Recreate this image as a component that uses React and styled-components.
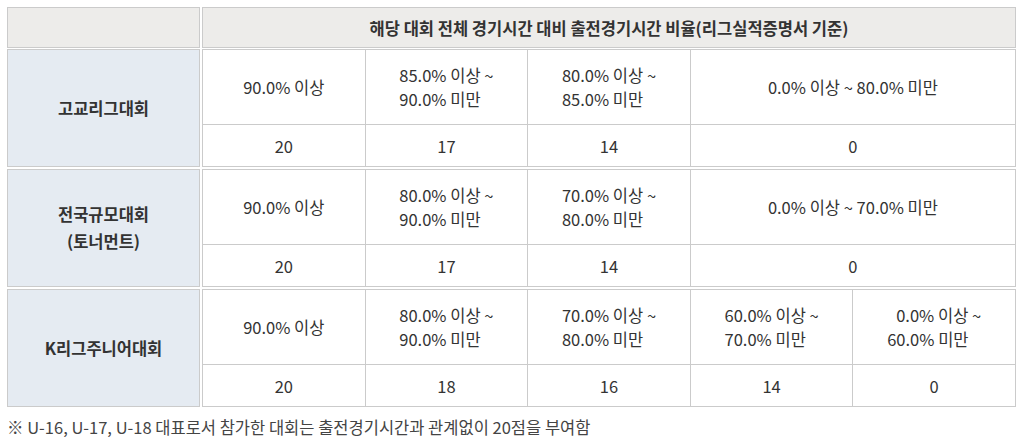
import React from "react";
import styled, { createGlobalStyle } from "styled-components";

const Global = createGlobalStyle`
  html, body { margin: 0; padding: 0; background: #ffffff; }
  body {
    font-family: "Noto Sans CJK KR", "Noto Sans", sans-serif;
    color: #333333;
  }
`;

const Page = styled.div`
  padding: 7px 0 0 7px;
  width: 1009px;
`;

const Table = styled.div`
  display: grid;
  grid-template-columns: 193px 814px;
  column-gap: 2px;
`;

const Section = styled.div`
  display: contents;
`;

const Box = styled.div`
  box-sizing: border-box;
  border: 1px solid #cbcbcb;
  margin-top: ${(p) => p.$gap || 0}px;
`;

const HeadCell = styled(Box)`
  height: 41px;
  background: #edecea;
  display: flex;
  align-items: center;
  justify-content: center;
  font-size: 16.5px;
  font-weight: 700;
  color: #333;
`;

const LabelCell = styled(Box)`
  height: 118px;
  background: #e5ebf2;
  display: flex;
  align-items: center;
  justify-content: center;
  text-align: center;
  font-size: 16.5px;
  font-weight: 700;
  line-height: 27px;
  color: #333;
`;

const Grid = styled(Box)`
  height: 118px;
  display: grid;
  grid-template-columns: repeat(5, 1fr);
  grid-template-rows: 74px 41px;
  gap: 1px;
  background: #cbcbcb;
`;

const Cell = styled.div`
  background: #ffffff;
  grid-column: span ${(p) => p.$span || 1};
  display: flex;
  align-items: center;
  justify-content: center;
  font-size: 16.5px;
  line-height: 24px;
  color: #333;
`;

const RangeText = styled.div`
  text-align: left;
`;

const Line = styled.div`
  padding-left: ${(p) => (p.$indent ? "9px" : "0")};
`;

const Note = styled.p`
  margin: 9px 0 0 0;
  font-size: 16.5px;
  line-height: 22px;
  color: #444;
`;

const groups = [
  {
    label: ["고교리그대회"],
    ranges: [
      { t: ["90.0% 이상"] },
      { t: ["85.0% 이상 ~", "90.0% 미만"] },
      { t: ["80.0% 이상 ~", "85.0% 미만"] },
      { t: ["0.0% 이상 ~ 80.0% 미만"], span: 2 },
    ],
    scores: [{ v: "20" }, { v: "17" }, { v: "14" }, { v: "0", span: 2 }],
  },
  {
    label: ["전국규모대회", "(토너먼트)"],
    ranges: [
      { t: ["90.0% 이상"] },
      { t: ["80.0% 이상 ~", "90.0% 미만"] },
      { t: ["70.0% 이상 ~", "80.0% 미만"] },
      { t: ["0.0% 이상 ~ 70.0% 미만"], span: 2 },
    ],
    scores: [{ v: "20" }, { v: "17" }, { v: "14" }, { v: "0", span: 2 }],
  },
  {
    label: ["K리그주니어대회"],
    ranges: [
      { t: ["90.0% 이상"] },
      { t: ["80.0% 이상 ~", "90.0% 미만"] },
      { t: ["70.0% 이상 ~", "80.0% 미만"] },
      { t: ["60.0% 이상 ~", "70.0% 미만"] },
      { t: ["0.0% 이상 ~", "60.0% 미만"], indent: true },
    ],
    scores: [{ v: "20" }, { v: "18" }, { v: "16" }, { v: "14" }, { v: "0" }],
  },
];

export default function App() {
  return (
    <>
      <Global />
      <Page>
        <Table>
          <HeadCell />
          <HeadCell>해당 대회 전체 경기시간 대비 출전경기시간 비율(리그실적증명서 기준)</HeadCell>
          {groups.map((g, gi) => {
            const gap = gi === 0 ? 1 : 2;
            return (
              <Section key={gi}>
                <LabelCell $gap={gap}>
                  <div>
                    {g.label.map((l, i) => (
                      <div key={i}>{l}</div>
                    ))}
                  </div>
                </LabelCell>
                <Grid $gap={gap}>
                  {g.ranges.map((r, i) => (
                    <Cell key={"r" + i} $span={r.span}>
                      <RangeText>
                        {r.t.map((l, j) => (
                          <Line key={j} $indent={r.indent && j === 0}>
                            {l}
                          </Line>
                        ))}
                      </RangeText>
                    </Cell>
                  ))}
                  {g.scores.map((s, i) => (
                    <Cell key={"s" + i} $span={s.span}>
                      {s.v}
                    </Cell>
                  ))}
                </Grid>
              </Section>
            );
          })}
        </Table>
        <Note>※ U-16, U-17, U-18 대표로서 참가한 대회는 출전경기시간과 관계없이 20점을 부여함</Note>
      </Page>
    </>
  );
}
